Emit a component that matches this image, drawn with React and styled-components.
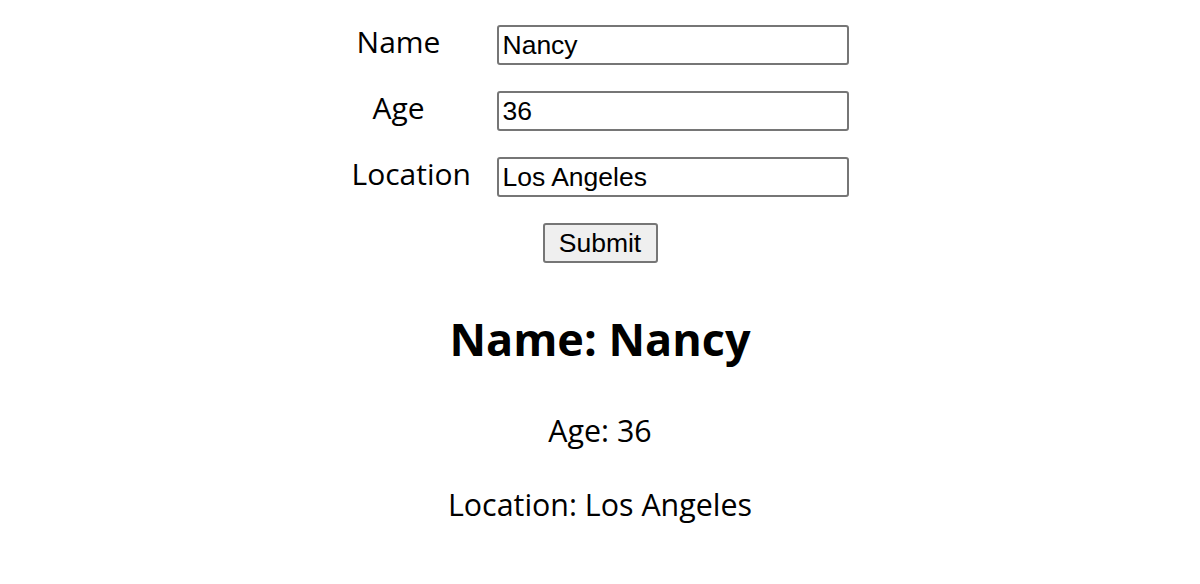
import React from "react";
import styled, { createGlobalStyle } from "styled-components";

const GlobalStyle = createGlobalStyle`
  html, body {
    margin: 0;
    padding: 0;
    background: #ffffff;
  }
  body {
    font-family: "Open Sans", "Noto Sans", sans-serif;
    color: #000000;
  }
`;

const Page = styled.div`
  display: flex;
  flex-direction: column;
  align-items: center;
  padding-top: 25px;
`;

const Form = styled.form`
  display: flex;
  flex-direction: column;
  align-items: center;
  gap: 26px;
`;

const Row = styled.div`
  display: grid;
  grid-template-columns: 94px 352px;
  grid-template-rows: 40px;
  column-gap: 51px;
  align-items: center;
`;

const Label = styled.label`
  align-self: start;
  font-family: "Open Sans", sans-serif;
  font-size: 30px;
  line-height: 34px;
  text-align: center;
  white-space: nowrap;
  overflow: visible;
`;

const Input = styled.input`
  box-sizing: border-box;
  width: 352px;
  height: 40px;
  margin: 0;
  padding: 0 4px;
  border: 2px solid #767676;
  border-radius: 3px;
  font-family: "Liberation Sans", Arial, sans-serif;
  font-size: 26.5px;
  color: #000;
  background: #fff;
  outline: none;
`;

const Button = styled.button`
  box-sizing: border-box;
  width: 115px;
  height: 40px;
  margin: 0;
  padding: 0;
  border: 2px solid #767676;
  border-radius: 3px;
  background: #efefef;
  font-family: "Liberation Sans", Arial, sans-serif;
  font-size: 26.5px;
  color: #000;
`;

const Result = styled.section`
  display: flex;
  flex-direction: column;
  align-items: center;
  margin-top: 48px;
`;

const Heading = styled.h1`
  margin: 0;
  font-family: "Open Sans", sans-serif;
  font-weight: 700;
  font-size: 45px;
  line-height: 56px;
`;

const Detail = styled.p`
  margin: ${(p) => p.$top}px 0 0;
  font-family: "Open Sans", sans-serif;
  font-size: 30.4px;
  line-height: 40px;
`;

const fields = [
  { label: "Name", value: "Nancy" },
  { label: "Age", value: "36" },
  { label: "Location", value: "Los Angeles" },
];

export default function App() {
  return (
    <>
      <GlobalStyle />
      <Page>
        <Form onSubmit={(e) => e.preventDefault()}>
          {fields.map((f) => (
            <Row key={f.label}>
              <Label>{f.label}</Label>
              <Input defaultValue={f.value} />
            </Row>
          ))}
          <Button type="submit">Submit</Button>
        </Form>
        <Result>
          <Heading>Name: Nancy</Heading>
          <Detail $top={44}>Age: 36</Detail>
          <Detail $top={34}>Location: Los Angeles</Detail>
        </Result>
      </Page>
    </>
  );
}
